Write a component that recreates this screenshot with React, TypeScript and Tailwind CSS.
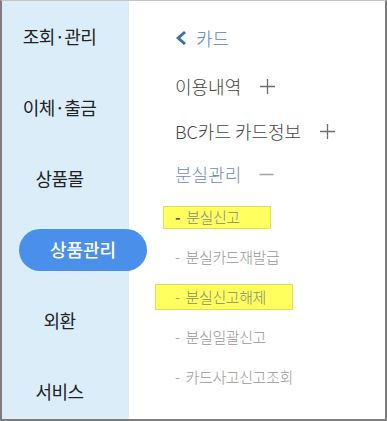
import React from "react";

const font = { fontFamily: '"Noto Sans CJK KR", "Noto Sans", sans-serif' };

const Plus = () => (
  <svg width="17" height="17" viewBox="0 0 17 17" className="ml-[18px] shrink-0">
    <path d="M8.5 1 V16 M1 8.5 H16" stroke="#6e6e6e" strokeWidth="1.3" fill="none" />
  </svg>
);

const Minus = () => (
  <svg width="15" height="17" viewBox="0 0 15 17" className="ml-[18px] shrink-0">
    <path d="M0.5 8.5 H14.5" stroke="#a5a5a5" strokeWidth="1.6" fill="none" />
  </svg>
);

export default function App() {
  const side = ["조회·관리", "이체·출금", "상품몰", "PILL", "외환", "서비스"];
  return (
    <div
      className="w-[387px] h-[421px] flex border-l-2 border-r-2 border-b-2 border-t border-t-[#c4c4c4] border-[#7d7d7d] bg-white overflow-hidden"
      style={font}
    >
      <div className="w-[127px] h-full bg-[#dcedfa] flex flex-col shrink-0 relative z-10">
        {side.map((s, i) =>
          s === "PILL" ? (
            <div key={i} className="h-[71px] flex items-center shrink-0">
              <div className="ml-[17px] w-[128px] h-[42px] shrink-0 rounded-full bg-[#4a8fe9] flex items-center justify-center text-white text-[18px] font-medium">
                상품관리
              </div>
            </div>
          ) : (
            <div
              key={i}
              className="h-[71px] flex items-center justify-center pr-[12px] text-[18px] font-normal tracking-[-0.6px] text-[#222] shrink-0"
            >
              {s}
            </div>
          )
        )}
      </div>
      <div className="flex-1 flex flex-col pl-[46px] pt-[24px] font-light">
        <div className="h-[26px] flex items-center text-[#5a83b7] text-[18px]">
          <svg width="13" height="16" viewBox="0 0 13 16" className="mr-[8px]">
            <path d="M10 2 L3.2 8 L10 14" fill="none" stroke="#3c6fb2" strokeWidth="3" />
          </svg>
          카드
        </div>
        <div className="h-[26px] mt-[22px] flex items-center text-[#444] text-[18px]">
          이용내역
          <Plus />
        </div>
        <div className="h-[26px] mt-[19px] flex items-center text-[#444] text-[18px]">
          BC카드 카드정보
          <Plus />
        </div>
        <div className="h-[26px] mt-[17px] flex items-center text-[#6f8fb6] text-[18px]">
          분실관리
          <Minus />
        </div>
        <div className="flex flex-col mt-[10px] text-[15px] text-[#999] tracking-[-0.4px]">
          <div className="h-[40px] flex items-center">
            <span className="ml-[-12px] h-[23px] pl-[11px] pr-[30px] bg-[#ffff5e] border border-[#dede5a] flex items-center text-[#888]">
              <span className="text-[#555] font-bold mr-[6px]">-</span>분실신고
            </span>
          </div>
          <div className="h-[40px] flex items-center">
            <span className="mr-[6px]">-</span>분실카드재발급
          </div>
          <div className="h-[40px] flex items-center">
            <span className="ml-[-20px] h-[26px] pl-[19px] pr-[26px] bg-[#ffff5e] border border-[#dede5a] flex items-center text-[#8a8a7a]">
              <span className="mr-[6px]">-</span>분실신고해제
            </span>
          </div>
          <div className="h-[40px] flex items-center">
            <span className="mr-[6px]">-</span>분실일괄신고
          </div>
          <div className="h-[40px] flex items-center">
            <span className="mr-[6px]">-</span>카드사고신고조회
          </div>
        </div>
      </div>
    </div>
  );
}
